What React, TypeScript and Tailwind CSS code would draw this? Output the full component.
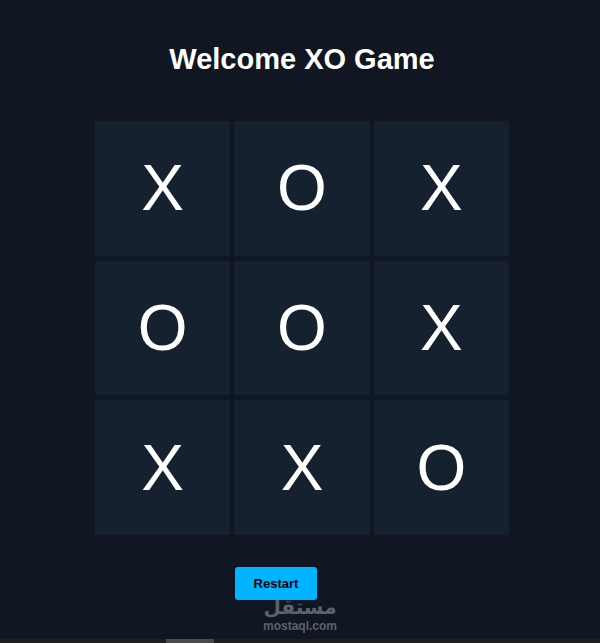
import { useState } from "react";

const finalBoard = ["X", "O", "X", "O", "O", "X", "X", "X", "O"];

function Watermark() {
  return (
    <div className="absolute left-[167px] top-7 flex w-[76px] flex-col items-center text-[#8b8f98]/65 pointer-events-none">
      <span
        dir="rtl"
        lang="ar"
        className="font-['DejaVu_Sans',sans-serif] text-[20px] leading-6 font-bold"
      >
        مستقل
      </span>
      <span className="text-[12px] leading-[14px] font-bold">mostaql.com</span>
    </div>
  );
}

export default function App() {
  const [cells, setCells] = useState(finalBoard);

  const play = (index: number) => {
    if (cells[index]) return;
    const turn = cells.filter(Boolean).length % 2 === 0 ? "X" : "O";
    setCells(cells.map((cell, i) => (i === index ? turn : cell)));
  };

  return (
    <div className="min-h-screen flex flex-col bg-[#101722] font-['Liberation_Sans',Arial,sans-serif]">
      <main className="flex flex-col items-center pt-[41px] pl-1">
        <h1 className="text-[29px] leading-9 font-bold text-white">Welcome XO Game</h1>

        <div className="mt-11 w-full max-w-[414px]">
          <div className="grid grid-cols-3 grid-rows-3 gap-x-1 gap-y-[5px] aspect-square">
            {cells.map((cell, i) => (
              <button
                key={i}
                type="button"
                aria-label={`Cell ${i + 1} ${cell}`}
                onClick={() => play(i)}
                className="flex items-center justify-center bg-[#162130] text-[64px] leading-[64px] text-white"
              >
                {cell}
              </button>
            ))}
          </div>

          <div className="relative mt-8 pl-[140px]">
            <button
              type="button"
              onClick={() => setCells(Array(9).fill(""))}
              className="block h-[33px] w-[82px] rounded-[3px] bg-[#00b4ff] text-[13px] font-bold text-black"
            >
              Restart
            </button>
            <Watermark />
          </div>
        </div>
      </main>

      <div className="mt-auto h-1 bg-[#1e1e1e] pl-[166px]">
        <div className="h-1 w-12 bg-[#4b4a4b]" />
      </div>
    </div>
  );
}
